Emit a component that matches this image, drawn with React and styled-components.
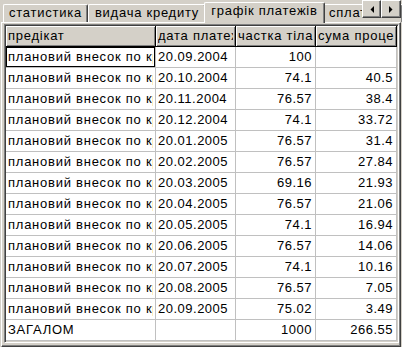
import React from "react";
import styled, { createGlobalStyle, css } from "styled-components";

const Global = createGlobalStyle`
  html, body { margin: 0; padding: 0; background: #d4d0c8; }
  body {
    font-family: "Liberation Sans", Arial, sans-serif;
    font-size: 13px;
    letter-spacing: 0.75px;
    color: #000;
  }
`;

const Window = styled.div`
  width: 402px;
  height: 347px;
  overflow: hidden;
  box-sizing: border-box;
  padding-left: 1px;
  background: #d4d0c8;
`;

const TabControl = styled.div`
  width: 400px;
  display: flex;
  flex-direction: column;
  position: relative;
`;

const TabStrip = styled.div`
  height: 22px;
  display: flex;
  flex-wrap: nowrap;
  align-items: flex-end;
  padding-left: 2px;
  box-sizing: border-box;
  position: relative;
  z-index: 2;
`;

const Tab = styled.div`
  flex: 0 0 ${(p) => p.$w}px;
  height: 18px;
  box-sizing: border-box;
  border-top: 1px solid #fff;
  border-left: 1px solid #fff;
  border-right: 1px solid #404040;
  border-radius: 2px 2px 0 0;
  box-shadow: inset -1px 0 #808080;
  background: #d4d0c8;
  text-align: ${(p) => (p.$left ? "left" : "center")};
  padding-left: ${(p) => (p.$left ? 5 : 0)}px;
  line-height: 16px;
  white-space: nowrap;
  overflow: hidden;
  ${(p) =>
    p.$active &&
    css`
      flex-basis: ${p.$w + 4}px;
      height: 21px;
      margin: 0 -2px -1px;
      position: relative;
      z-index: 1;
    `}
`;

const Scroller = styled.div`
  position: absolute;
  right: 0;
  top: 0;
  display: flex;
  z-index: 3;
`;

const ScrollButton = styled.div`
  width: ${(p) => p.$w}px;
  height: 18px;
  box-sizing: border-box;
  background: #d4d0c8;
  border: 1px solid;
  border-color: #fff #404040 #404040 #fff;
  box-shadow: inset -1px -1px #808080;
  display: flex;
  align-items: center;
  justify-content: center;
`;

const Panel = styled.div`
  height: 325px;
  box-sizing: border-box;
  border-top: 1px solid #fff;
  border-left: 1px solid #fff;
  border-right: 1px solid #404040;
  border-bottom: 1px solid #404040;
  box-shadow: inset -1px -1px #808080;
  padding: 1px 2px 3px 2px;
  display: flex;
`;

const GridBox = styled.div`
  flex: 1;
  box-sizing: border-box;
  background: #fff;
  border: 1px solid;
  border-color: #808080 #fff #fff #808080;
  box-shadow: inset 1px 1px #404040, inset -1px -1px #d4d0c8;
  padding: 1px;
  display: flex;
`;

const Table = styled.div`
  flex: 1;
  overflow: hidden;
  display: grid;
  grid-template-columns: 150px 80px 80px 81px;
  grid-auto-rows: 21px;
  align-content: start;
`;

const Cell = styled.div`
  box-sizing: border-box;
  border-right: 1px solid #c0c0c0;
  border-bottom: 1px solid #c0c0c0;
  padding: 0 ${(p) => (p.$num ? 3 : 2)}px 0 2px;
  line-height: 20px;
  text-align: ${(p) => (p.$num ? "right" : "left")};
  letter-spacing: ${(p) => (p.$digits ? "0.5px" : "0.75px")};
  min-width: 0;
  ${(p) =>
    p.$focus &&
    css`
      box-shadow: inset 0 0 0 1px #000;
    `}
`;

const CellText = styled.span`
  display: block;
  white-space: nowrap;
  overflow: hidden;
`;

const HeadCell = styled(Cell)`
  background: #d4d0c8;
  border-right-color: #000;
  border-bottom-color: #000;
  box-shadow: inset 1px 1px #fff, inset -1px -1px #808080;
`;

const Arrow = ({ dir }) => (
  <svg width="4" height="7" viewBox="0 0 4 7">
    {dir === "left" ? (
      <polygon points="4,0 4,7 0.5,3.5" fill="#000" />
    ) : (
      <polygon points="0,0 0,7 3.5,3.5" fill="#000" />
    )}
  </svg>
);

const tabs = [
  { label: "статистика", w: 85 },
  { label: "видача кредиту", w: 118 },
  { label: "графік платежів", w: 117, active: true },
  { label: "сплати", w: 80, left: true },
];

const headers = ["предікат", "дата платежу", "частка тіла", "сума процентів"];

const rows = [
  ["20.09.2004", "100", ""],
  ["20.10.2004", "74.1", "40.5"],
  ["20.11.2004", "76.57", "38.4"],
  ["20.12.2004", "74.1", "33.72"],
  ["20.01.2005", "76.57", "31.4"],
  ["20.02.2005", "76.57", "27.84"],
  ["20.03.2005", "69.16", "21.93"],
  ["20.04.2005", "76.57", "21.06"],
  ["20.05.2005", "74.1", "16.94"],
  ["20.06.2005", "76.57", "14.06"],
  ["20.07.2005", "74.1", "10.16"],
  ["20.08.2005", "76.57", "7.05"],
  ["20.09.2005", "75.02", "3.49"],
];

export default function App() {
  return (
    <>
      <Global />
      <Window>
        <TabControl>
          <TabStrip>
            {tabs.map((t) => (
              <Tab key={t.label} $w={t.w} $active={t.active} $left={t.left}>
                {t.label}
              </Tab>
            ))}
          </TabStrip>
          <Scroller>
            <ScrollButton $w={19}>
              <Arrow dir="left" />
            </ScrollButton>
            <ScrollButton $w={20}>
              <Arrow dir="right" />
            </ScrollButton>
          </Scroller>
          <Panel>
            <GridBox>
              <Table>
                {headers.map((h) => (
                  <HeadCell key={h}>
                    <CellText>{h}</CellText>
                  </HeadCell>
                ))}
                {rows.map((r, i) => (
                  <React.Fragment key={i}>
                    <Cell $focus={i === 0}>
                      <CellText>плановий внесок по кредиту</CellText>
                    </Cell>
                    <Cell $digits>
                      <CellText>{r[0]}</CellText>
                    </Cell>
                    <Cell $num $digits>
                      <CellText>{r[1]}</CellText>
                    </Cell>
                    <Cell $num $digits>
                      <CellText>{r[2]}</CellText>
                    </Cell>
                  </React.Fragment>
                ))}
                <Cell>
                  <CellText>ЗАГАЛОМ</CellText>
                </Cell>
                <Cell />
                <Cell $num $digits>
                  <CellText>1000</CellText>
                </Cell>
                <Cell $num $digits>
                  <CellText>266.55</CellText>
                </Cell>
              </Table>
            </GridBox>
          </Panel>
        </TabControl>
      </Window>
    </>
  );
}
